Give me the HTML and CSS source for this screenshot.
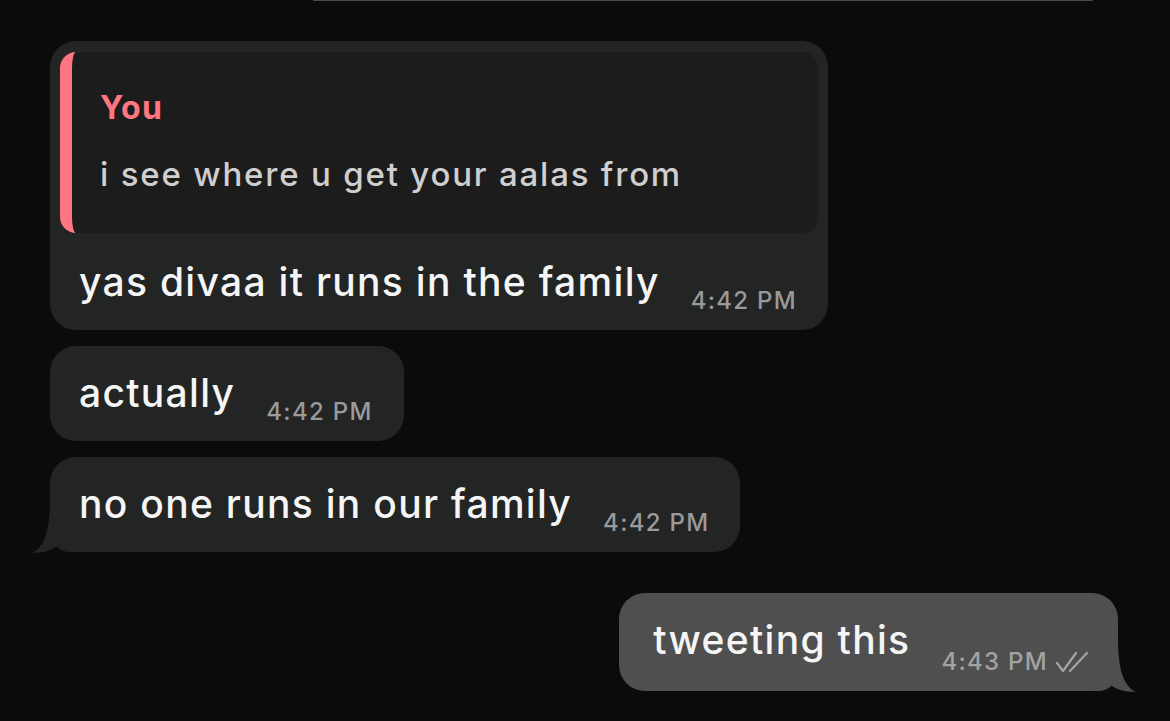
FILE: index.html
```html
<!DOCTYPE html>
<html lang="en">
<head>
    <meta charset="UTF-8">
    <meta name="viewport" content="width=device-width, initial-scale=1.0">
    <title>Chat</title>
    <link rel="stylesheet" href="styles.css">
</head>
<body>
    <div class="chat">
        <div class="prev-bubble"></div>

        <div class="bubble incoming first">
            <div class="reply">
                <div class="reply-name">You</div>
                <div class="reply-text">i see where u get your aalas from</div>
            </div>
            <div class="row">
                <span class="text">yas divaa it runs in the family</span>
                <span class="time">4:42 PM</span>
            </div>
        </div>

        <div class="bubble incoming">
            <div class="row">
                <span class="text">actually</span>
                <span class="time">4:42 PM</span>
            </div>
        </div>

        <div class="bubble incoming last">
            <div class="row">
                <span class="text">no one runs in our family</span>
                <span class="time">4:42 PM</span>
            </div>
            <svg class="tail tail-left" width="50" height="55" viewBox="0 0 50 55">
                <path d="M20 0 C20 30 15 48 2 54 C15 54 23 51 30 45 C34 50 40 53 50 53 L50 0 Z"/>
            </svg>
        </div>

        <div class="bubble outgoing">
            <div class="row">
                <span class="text">tweeting this</span>
                <span class="time">4:43 PM
                    <svg class="checks" width="36" height="24" viewBox="0 0 36 24">
                        <path d="M3 13 L9 21 L22 3"/>
                        <path d="M16 21 L33 3"/>
                    </svg>
                </span>
            </div>
            <svg class="tail tail-right" width="50" height="55" viewBox="0 0 50 55">
                <path d="M20 0 C20 30 15 48 2 54 C15 54 23 51 30 45 C34 50 40 53 50 53 L50 0 Z"/>
            </svg>
        </div>
    </div>
</body>
</html>
```

FILE: styles.css
```css
body {
    margin: 0;
    background-color: #0b0b0b;
    font-family: Inter, "Noto Sans", sans-serif;
    height: 721px;
    overflow: hidden;
}
.chat {
    display: flex;
    flex-direction: column;
    align-items: flex-start;
}
.prev-bubble {
    width: 780px;
    height: 1px;
    margin-left: 313px;
    background-color: #4a4a4a;
    border-radius: 0 0 2px 2px;
}
.bubble {
    position: relative;
    border-radius: 26px;
    padding: 22px 31px 23px 29px;
    margin-left: 50px;
    margin-top: 16px;
}
.incoming {
    background-color: #232424;
}
.first {
    margin-top: 40px;
    width: 778px;
    box-sizing: border-box;
    padding: 11px 10px 23px 10px;
}
.last {
    border-bottom-left-radius: 20px;
}
.outgoing {
    background-color: #4f4f4f;
    align-self: flex-end;
    margin-right: 52px;
    margin-top: 41px;
    padding: 22px 28px 26px 34px;
    border-bottom-right-radius: 20px;
}
.reply {
    background-color: #1c1c1c;
    border-radius: 16px;
    border-left: 12px solid #ff7580;
    padding: 36px 28px 39px 28px;
    margin-bottom: 24px;
}
.reply-name {
    color: #ff7580;
    font-weight: 700;
    font-size: 32px;
    line-height: 40px;
    letter-spacing: 1.2px;
}
.reply-text {
    color: #cfcfcf;
    font-size: 33px;
    font-weight: 500;
    line-height: 40px;
    letter-spacing: 1.8px;
    margin-top: 26px;
}
.first .row {
    padding: 0 21px 0 19px;
}
.row {
    display: flex;
    align-items: flex-end;
}
.text {
    color: #f5f5f5;
    font-size: 39px;
    font-weight: 500;
    line-height: 50px;
    letter-spacing: 1.3px;
}
.time {
    color: #9a9a9a;
    font-size: 24px;
    font-weight: 500;
    line-height: 30px;
    letter-spacing: 1.3px;
    margin-left: 31px;
    margin-bottom: -9px;
    display: flex;
    align-items: center;
    white-space: nowrap;
}
.first .time {
    margin-left: auto;
}
.outgoing .time {
    color: #a3a3a3;
    margin-bottom: -12px;
}
.checks {
    margin-left: 6px;
    fill: none;
    stroke: #a3a3a3;
    stroke-width: 2.2;
    stroke-linecap: round;
    stroke-linejoin: round;
}
.tail {
    position: absolute;
    bottom: -2px;
}
.tail-left {
    left: -20px;
    fill: #232424;
}
.tail-right {
    right: -20px;
    fill: #4f4f4f;
    transform: scaleX(-1);
}
```
